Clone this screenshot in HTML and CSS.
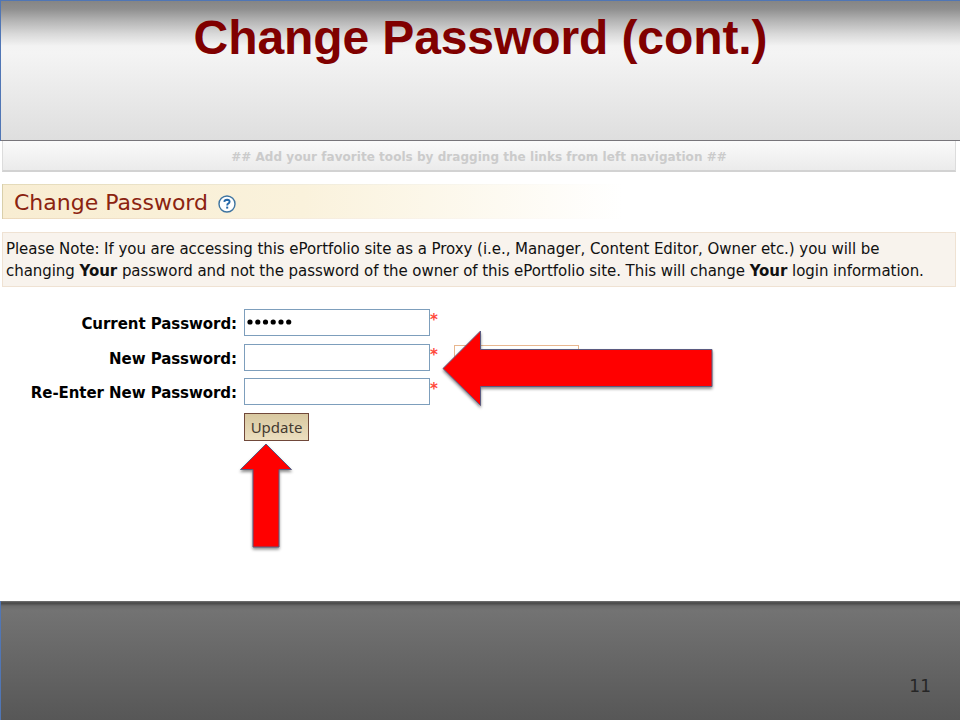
FILE: index.html
```html
<!DOCTYPE html>
<html lang="en">
<head>
  <meta charset="UTF-8">
  <title>Change Password (cont.)</title>
  <link rel="stylesheet" href="styles.css">
</head>
<body>
  <div class="slide">
    <header class="slide-header">
      <h1>Change Password (cont.)</h1>
    </header>

    <main class="content">
      <div class="toolbar"><span>## Add your favorite tools by dragging the links from left navigation ##</span></div>

      <div class="page-title">
        <h2>Change Password</h2>
        <svg class="help" width="18" height="18" viewBox="0 0 18 18">
          <circle cx="9" cy="9" r="8" fill="#fff" stroke="#3e74a0" stroke-width="1.4"/>
          <path d="M6.3 6.9 Q6.5 4.7 9.1 4.7 Q11.6 4.8 11.6 6.8 Q11.6 8 10.2 8.7 Q9.2 9.2 9.2 10.5" fill="none" stroke="#2467a8" stroke-width="1.9"/>
          <rect x="8.2" y="11.6" width="2" height="2" fill="#2467a8"/>
        </svg>
      </div>

      <div class="note">
        <div>Please Note: If you are accessing this ePortfolio site as a Proxy (i.e., Manager, Content Editor, Owner etc.) you will be</div>
        <div>changing <b>Your</b> password and not the password of the owner of this ePortfolio site. This will change <b>Your</b> login information.</div>
      </div>

      <form class="form">
        <label>Current Password:</label>
        <div class="field">
          <svg width="46" height="6" viewBox="0 0 46 6">
            <circle cx="3" cy="3" r="2.6"/>
            <circle cx="10.8" cy="3" r="2.6"/>
            <circle cx="18.5" cy="3" r="2.6"/>
            <circle cx="26.2" cy="3" r="2.6"/>
            <circle cx="34" cy="3" r="2.6"/>
            <circle cx="41.7" cy="3" r="2.6"/>
          </svg>
        </div>
        <span class="required">*</span>

        <label>New Password:</label>
        <div class="field"></div>
        <span class="required">*</span>

        <label>Re-Enter New Password:</label>
        <div class="field"></div>
        <span class="required">*</span>

        <button type="button" class="update">Update</button>
      </form>

      <div class="strength"></div>

      <svg class="arrow arrow-left" width="280" height="90" viewBox="0 0 280 90">
        <path d="M3 38.5 L40.5 1 V19.5 H272 V56.5 H40.5 V75.5 Z"/>
      </svg>
      <svg class="arrow arrow-up" width="60" height="112" viewBox="0 0 60 112">
        <path d="M29 1 L54.5 26.5 H42 V104 H16 V26.5 H3.5 Z"/>
      </svg>
    </main>

    <footer class="slide-footer">
      <span class="number">11</span>
    </footer>
  </div>
</body>
</html>
```

FILE: styles.css
```css
* {
  box-sizing: border-box;
}
body {
  margin: 0;
  font-family: "DejaVu Sans", Verdana, sans-serif;
  color: #111;
}
.slide {
  width: 960px;
  height: 720px;
  display: flex;
  flex-direction: column;
  overflow: hidden;
}
.slide-header {
  height: 141px;
  border-top: 1px solid #5076b5;
  border-left: 1px solid #5076b5;
  border-bottom: 1px solid #77757a;
  background: linear-gradient(#858585 0, #8f8f8f 8px, #b5b5b5 20px, #d9d9d9 33px, #f3f3f3 45px, #f4f4f4 52px, #dedede 140px);
}
h1 {
  margin: 0;
  padding-top: 9px;
  text-align: center;
  font: bold 48px/56px "Liberation Sans", Arial, sans-serif;
  letter-spacing: -0.1px;
  color: #800000;
}
.content {
  position: relative;
  height: 460px;
  padding: 0 4px 0 2px;
  background: #fff;
}
.toolbar {
  height: 31px;
  border: 1px solid #dcdcdc;
  border-top: 0;
  border-bottom: 2px solid #d2d2d2;
  background: linear-gradient(#fafafa, #ebebeb);
  text-align: center;
  font-weight: bold;
  font-size: 12px;
  letter-spacing: 0.04px;
  line-height: 32px;
  color: #cbcbcb;
  white-space: nowrap;
}
.page-title {
  display: flex;
  align-items: center;
  height: 35px;
  margin-top: 12px;
  padding-left: 11px;
  border-left: 1px solid #d9cfaa;
  background:
    linear-gradient(to right, #e4dab8, #fff 620px) top / 100% 1px no-repeat,
    linear-gradient(to right, #ecd9bb, #fff 620px) bottom / 100% 1px no-repeat,
    linear-gradient(to right, #f8edd2, #faf2dc 300px, #fff 620px);
}
h2 {
  margin: 0;
  padding-top: 1px;
  width: 204px;
  font-size: 22px;
  font-weight: normal;
  color: #8b2310;
  white-space: nowrap;
}
.help {
  margin-top: 4px;
}
.note {
  height: 55px;
  margin-top: 13px;
  padding: 5px 3px;
  border: 1px solid #efe2d3;
  background: #f8f3ed;
  font-size: 15px;
  letter-spacing: -0.05px;
  line-height: 22px;
  white-space: nowrap;
}
.form {
  display: grid;
  grid-template-columns: 235px 186px 12px;
  grid-auto-rows: 27px;
  column-gap: 7px;
  row-gap: 7.5px;
  margin-top: 22px;
}
label {
  justify-self: end;
  font-size: 15px;
  font-weight: bold;
  letter-spacing: -0.06px;
  line-height: 31px;
  white-space: nowrap;
  color: #000;
}
.field {
  height: 27px;
  padding: 9px 2px;
  border: 1px solid #7d9ebc;
  line-height: 0;
}
.required {
  margin-left: -7px;
  font-size: 15px;
  font-weight: bold;
  line-height: 23px;
  color: #ff4a3c;
}
.update {
  grid-column: 2;
  width: 65px;
  height: 28px;
  padding: 0;
  border: 1px solid #70483a;
  background: linear-gradient(#d8c8a0, #ecdfc0);
  font: 15px "Noto Sans", sans-serif;
  color: #443a30;
}
.strength {
  position: absolute;
  left: 454px;
  top: 204px;
  width: 125px;
  height: 26px;
  border: 1px solid #e8b78f;
}
.arrow {
  position: absolute;
  fill: #f00;
  stroke: #5b5a80;
  stroke-width: 1;
  filter: drop-shadow(0 2px 1.5px rgba(0, 0, 0, 0.45));
}
.arrow-left {
  left: 440px;
  top: 189px;
}
.arrow-up {
  left: 237px;
  top: 302px;
}
.slide-footer {
  flex: 1;
  display: flex;
  justify-content: flex-end;
  align-items: flex-end;
  padding: 0 29px 22px 0;
  border-left: 1px solid #5076b5;
  background: linear-gradient(#757575 0, #474747 2px, #6b6b6b 5px, #737373 9px, #575757 100%);
}
.number {
  font-size: 17px;
  line-height: 24px;
  color: #262626;
}
```
